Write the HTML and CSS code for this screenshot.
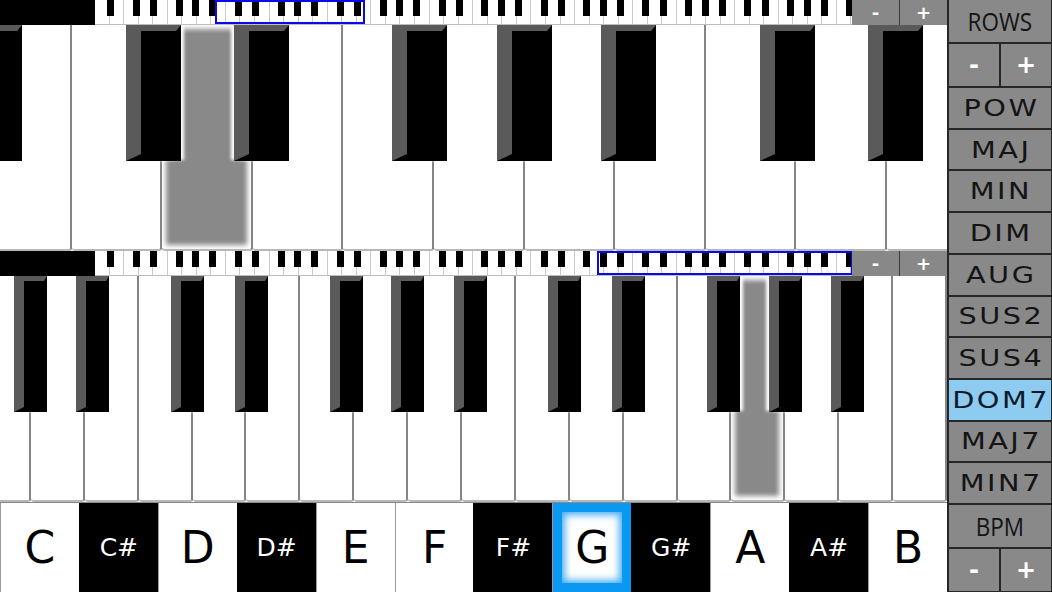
FILE: index.html
```html
<!DOCTYPE html>
<html lang="en">
<head>
  <meta charset="UTF-8" />
  <meta name="viewport" content="width=device-width, initial-scale=1.0" />
  <title>Chord Piano</title>
  <link rel="stylesheet" href="styles.css">
</head>
<body>
  <div class="app">
    <div class="stage">
      <div class="strip">
        <div class="strip-pad"></div>
        <div class="mini" id="mini-top">
          <div class="viewport" style="left: 120px; width: 150px;"></div>
        </div>
        <div class="zoom-btns">
          <button>-</button>
          <button>+</button>
        </div>
      </div>

      <div class="keys keys-upper" id="upper"></div>

      <div class="strip">
        <div class="strip-pad"></div>
        <div class="mini" id="mini-mid">
          <div class="viewport" style="left: 502px; width: 256px;"></div>
        </div>
        <div class="zoom-btns">
          <button>-</button>
          <button>+</button>
        </div>
      </div>

      <div class="keys keys-lower" id="lower"></div>

      <div class="notes">
        <div class="note">C</div>
        <div class="note sharp">C#</div>
        <div class="note">D</div>
        <div class="note sharp">D#</div>
        <div class="note">E</div>
        <div class="note">F</div>
        <div class="note sharp">F#</div>
        <div class="note active">G</div>
        <div class="note sharp">G#</div>
        <div class="note">A</div>
        <div class="note sharp">A#</div>
        <div class="note">B</div>
      </div>
    </div>

    <aside class="panel">
      <div class="cell title"><span>ROWS</span></div>
      <div class="pair">
        <button class="cell">-</button>
        <button class="cell">+</button>
      </div>
      <div class="cell chord"><span>POW</span></div>
      <div class="cell chord"><span>MAJ</span></div>
      <div class="cell chord"><span>MIN</span></div>
      <div class="cell chord"><span>DIM</span></div>
      <div class="cell chord"><span>AUG</span></div>
      <div class="cell chord"><span>SUS2</span></div>
      <div class="cell chord"><span>SUS4</span></div>
      <div class="cell chord active"><span>DOM7</span></div>
      <div class="cell chord"><span>MAJ7</span></div>
      <div class="cell chord"><span>MIN7</span></div>
      <div class="cell title"><span>BPM</span></div>
      <div class="pair">
        <button class="cell">-</button>
        <button class="cell">+</button>
      </div>
    </aside>
  </div>

  <script>
    // where each sharp starts, measured back from the right edge of its white key (in key widths)
    const SHARPS = { C: 0.40, D: 0.21, F: 0.46, G: 0.31, A: 0.155 };
    const NAMES = ['C', 'D', 'E', 'F', 'G', 'A', 'B'];

    function buildKeys(id, opts) {
      const board = document.getElementById(id);
      const row = document.createElement('div');
      row.className = 'white-row';
      row.style.marginLeft = opts.offset + 'px';
      board.prepend(row);

      const start = NAMES.indexOf(opts.first);
      const from = opts.lead ? -1 : 0;
      const to = opts.tail ? opts.count : opts.count - 1;

      for (let i = from; i < opts.count; i++) {
        const name = NAMES[(start + i + 7) % 7];

        if (i >= 0) {
          const key = document.createElement('div');
          key.className = i === opts.pressed ? 'wkey pressed' : 'wkey';
          row.appendChild(key);
        }

        if (name in SHARPS && i < to) {
          const sharp = document.createElement('div');
          sharp.className = 'bkey';
          sharp.style.left = (opts.offset + (i + 1 - SHARPS[name]) * opts.width) + 'px';
          board.appendChild(sharp);
        }
      }
    }

    // overview strips show the whole 88 key piano, A0 to C8
    const overview = { first: 'A', count: 53, width: 14.56, offset: 0, pressed: -1, lead: false, tail: true };
    buildKeys('mini-top', overview);
    buildKeys('mini-mid', overview);

    buildKeys('upper', { first: 'B', count: 11, width: 90.6, offset: -19, pressed: 2, lead: true, tail: false });
    buildKeys('lower', { first: 'G', count: 18, width: 53.9, offset: -23, pressed: 14, lead: true, tail: false });
  </script>
</body>
</html>
```

FILE: styles.css
```css
* {
  margin: 0;
  padding: 0;
  box-sizing: border-box;
}

body {
  width: 1052px;
  height: 592px;
  overflow: hidden;
  background: #fff;
  font-family: "DejaVu Sans", sans-serif;
}

button {
  font-family: inherit;
  cursor: pointer;
}

.app {
  display: flex;
  height: 592px;
}

.stage {
  width: 947px;
  display: flex;
  flex-direction: column;
}

/* overview strip */

.strip {
  flex: none;
  height: 25px;
  display: flex;
}

.strip-pad {
  width: 95px;
  background: #000;
}

.mini {
  flex: 1;
  position: relative;
  overflow: hidden;
  background: #fff;
}

.white-row {
  display: flex;
  height: 100%;
}

.wkey {
  flex: none;
  background: #fff;
}

.mini .wkey {
  width: 14.56px;
  border-right: 1px solid #cacaca;
  border-bottom: 1px solid #bcbcbc;
}

.bkey {
  position: absolute;
  top: 0;
}

.mini .bkey {
  width: 7px;
  height: 16px;
  background: #000;
}

.viewport {
  position: absolute;
  top: 0;
  bottom: 1px;
  border: 2px solid #0a0ae6;
  z-index: 2;
}

.zoom-btns {
  width: 95px;
  display: flex;
  gap: 1px;
  background: #3c3c3c;
}

.zoom-btns button {
  flex: 1;
  border: none;
  background: #888;
  color: #fff;
  font-size: 18px;
  font-weight: bold;
  line-height: 24px;
}

/* big keyboards */

.keys {
  flex: none;
  position: relative;
  overflow: hidden;
  height: 226px;
  background: #fff;
}

.keys .wkey {
  border-right: 2px solid #858585;
  border-bottom: 2px solid #b8b8b8;
  border-radius: 0 0 3px 3px;
}

.keys-upper .wkey {
  width: 90.6px;
}

.keys-lower .wkey {
  width: 53.9px;
}

.wkey.pressed {
  background: #898989;
  box-shadow: inset 0 0 5px 4px #fff;
}

.keys .bkey {
  height: 136px;
  background: #000;
  border-style: solid;
  border-color: #5a5a5a #000 #000 #5a5a5a;
  box-shadow: -4px 0 3px -1px #fff, 4px 0 3px -1px #fff;
}

.keys-upper .bkey {
  width: 55px;
  border-width: 6px 5px 7px 15px;
}

.keys-lower .bkey {
  width: 33px;
  border-width: 5px 3px 5px 10px;
}

/* note picker */

.notes {
  flex: none;
  height: 90px;
  display: grid;
  grid-template-columns: repeat(12, 1fr);
  border-top: 1px solid #8a8a8a;
}

.note {
  display: flex;
  align-items: center;
  justify-content: center;
  background: #fff;
  color: #000;
  font-size: 44px;
  border-left: 1px solid #9a9a9a;
}

.note.sharp {
  background: #000;
  color: #fff;
  font-size: 25px;
  border-left-color: #000;
}

.note.active {
  box-shadow: inset 0 0 0 9px #0c97f2, inset 0 0 7px 12px #49b0f5;
}

/* side panel */

.panel {
  width: 105px;
  display: grid;
  grid-template-rows: 42px 42px repeat(10, 1fr) 42px 42px;
  gap: 2px;
  padding: 0 1px 1px 2px;
  background: #262626;
}

.cell {
  display: flex;
  align-items: center;
  justify-content: center;
  background: #898989;
  color: #141414;
  overflow: hidden;
}

.pair {
  display: grid;
  grid-template-columns: 1fr 1fr;
  gap: 2px;
}

.pair button {
  border: none;
  color: #fff;
  font-size: 24px;
  font-weight: bold;
}

.chord span {
  display: inline-block;
  font-size: 23px;
  letter-spacing: 2px;
  margin-right: -2px;
  transform: scaleX(1.25);
}

.chord.active {
  background: #8ecbf0;
  color: #0a1a2a;
}

.title span {
  display: inline-block;
  font-family: "Open Sans", sans-serif;
  font-size: 25px;
  transform: scaleX(0.9);
}
```
